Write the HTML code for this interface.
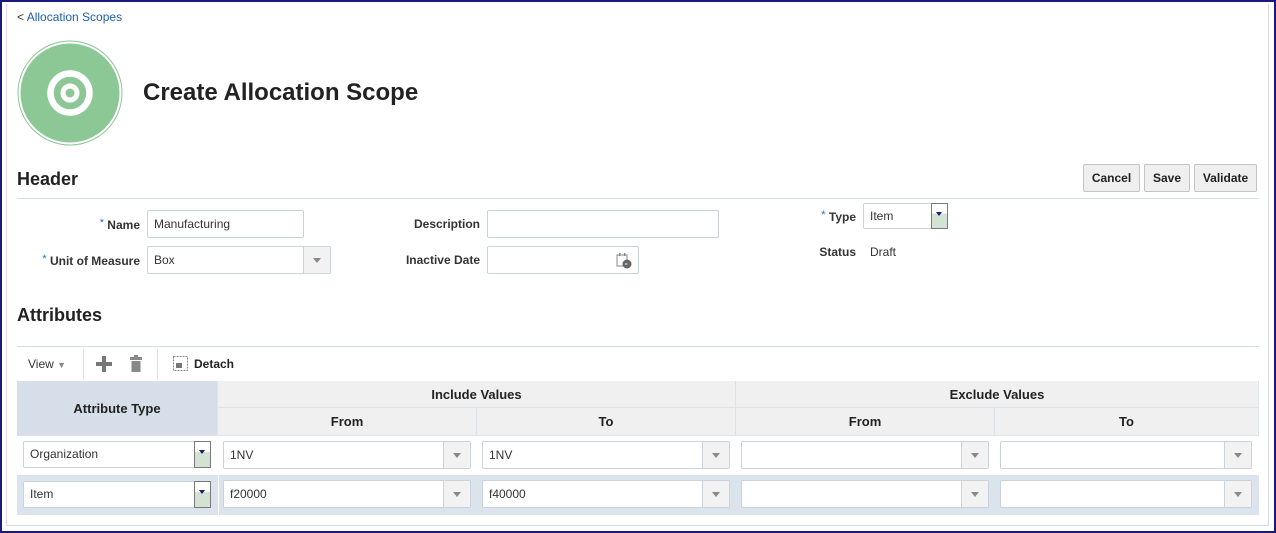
<!DOCTYPE html>
<html><head><meta charset="utf-8"><style>
*{box-sizing:border-box;margin:0;padding:0}
body{width:1276px;height:533px;overflow:hidden;background:#fff;font-family:"Liberation Sans",Arial,sans-serif;font-size:12px;color:#333;position:relative}
.frame{position:absolute;left:0;top:0;width:1276px;height:533px;border:2px solid #1a1a7a}
.panel{position:absolute;left:6px;top:4px;width:1263px;height:522px;border:1px solid #d6dde6;border-top:none}
.a{position:absolute}
.lbl{position:absolute;font-weight:bold;color:#333;text-align:right;font-size:12px}
.star{color:#1f6fc9;font-weight:normal;vertical-align:3px;font-size:11px}
.in{position:absolute;border:1px solid #c9d3dc;border-radius:2px;background:#fff;padding-left:6px;line-height:26px;font-size:12px;color:#333}
.dd{position:absolute;right:0;top:0;bottom:0;width:27px;border-left:1px solid #c9d3dc;background:#f2f2f2}
.dd:after{content:"";position:absolute;left:9px;top:11px;border:4.5px solid transparent;border-top:5px solid #8a8a8a}
.sd{position:absolute;right:-1px;top:-1px;bottom:-1px;width:17px;border:1px solid #7a7a7a;background:linear-gradient(#fff 40%,#d4e2d4 40%)}
.sd:after{content:"";position:absolute;left:4px;top:8px;border:3.5px solid transparent;border-top:4px solid #1a1a7a}
.btn{position:absolute;top:164px;height:28px;border:1px solid #c4c4c4;border-radius:2px;background:#efefef;font-weight:bold;font-size:12px;color:#222;text-align:center;line-height:26px}
h2{position:absolute;font-size:18px;font-weight:bold;color:#222}
.th{position:absolute;background:#f0f0f0;font-weight:bold;color:#222;text-align:center;font-size:13px;border-right:1px solid #dde3ea;border-bottom:1px solid #dde3ea}
</style></head><body>
<div class="frame"></div>
<div class="panel"></div>
<div class="a" style="left:17px;top:10px;font-size:12px;color:#333">&lt; <span style="color:#1f5fa8">Allocation Scopes</span></div>
<svg class="a" style="left:17px;top:40px" width="106" height="106" viewBox="0 0 106 106">
<circle cx="53" cy="53" r="52" fill="#fff" stroke="#8cc796" stroke-width="1"/>
<circle cx="53" cy="53" r="49.5" fill="#8cc796"/>
<circle cx="53" cy="53" r="19.5" fill="none" stroke="#fff" stroke-width="6.5"/>
<circle cx="53" cy="53" r="7" fill="none" stroke="#fff" stroke-width="5"/>
</svg>
<div class="a" style="left:143px;top:79px;font-size:24px;font-weight:bold;color:#222">Create Allocation Scope</div>
<h2 style="left:17px;top:169px">Header</h2>
<div class="a" style="left:17px;top:198px;width:1242px;height:1px;background:#d6dde6"></div>
<div class="btn" style="left:1083px;width:57px">Cancel</div>
<div class="btn" style="left:1144px;width:46px">Save</div>
<div class="btn" style="left:1194px;width:63px">Validate</div>
<div class="lbl" style="left:40px;top:217px;width:100px"><span class="star">*</span> Name</div>
<div class="in" style="left:147px;top:210px;width:157px;height:28px">Manufacturing</div>
<div class="lbl" style="left:30px;top:253px;width:110px"><span class="star">*</span> Unit of Measure</div>
<div class="in" style="left:147px;top:246px;width:184px;height:28px">Box<div class="dd"></div></div>
<div class="lbl" style="left:380px;top:217px;width:100px">Description</div>
<div class="in" style="left:487px;top:210px;width:232px;height:28px"></div>
<div class="lbl" style="left:380px;top:253px;width:100px">Inactive Date</div>
<div class="in" style="left:487px;top:246px;width:152px;height:28px">
<svg style="position:absolute;right:6px;top:6px" width="16" height="16" viewBox="0 0 16 16"><rect x="1" y="2" width="10" height="11" fill="none" stroke="#888"/><rect x="3" y="0" width="1.5" height="3" fill="#888"/><rect x="8" y="0" width="1.5" height="3" fill="#888"/><circle cx="11" cy="11" r="4.5" fill="#666"/><path d="M9 11h2.5" stroke="#fff"/></svg></div>
<div class="lbl" style="left:800px;top:209px;width:56px"><span class="star">*</span> Type</div>
<div class="in" style="left:863px;top:203px;width:85px;height:26px;line-height:24px">Item<div class="sd"></div></div>
<div class="lbl" style="left:800px;top:245px;width:56px">Status</div>
<div class="a" style="left:870px;top:245px;font-size:12px">Draft</div>
<h2 style="left:17px;top:305px">Attributes</h2>
<div class="a" style="left:17px;top:346px;width:1242px;height:1px;background:#d6dde6"></div>
<div class="a" style="left:28px;top:357px;font-size:12px">View <span style="color:#888;font-size:9px">▼</span></div>
<div class="a" style="left:83px;top:349px;width:1px;height:30px;background:#dde3ea"></div>
<div class="a" style="left:96px;top:356px;width:16px;height:16px"><div class="a" style="left:0;top:6px;width:16px;height:4px;background:#777"></div><div class="a" style="left:6px;top:0;width:4px;height:16px;background:#777"></div></div>
<svg class="a" style="left:130px;top:355px" width="12" height="17" viewBox="0 0 12 17"><rect x="4" y="0" width="4" height="2" fill="#888"/><rect x="0" y="2" width="12" height="3" fill="#888"/><rect x="1.5" y="6" width="9" height="11" fill="#888"/></svg>
<div class="a" style="left:157px;top:349px;width:1px;height:30px;background:#dde3ea"></div>
<svg class="a" style="left:173px;top:356px" width="15" height="15"><rect x="0.5" y="0.5" width="14" height="14" fill="none" stroke="#888" stroke-dasharray="2 1"/><rect x="3" y="7" width="6" height="5" fill="#777"/></svg>
<div class="a" style="left:194px;top:357px;font-weight:bold;color:#222">Detach</div>
<div class="a" style="left:17px;top:381px;width:1242px;height:134px;background:#dbe3ec"></div>
<div class="th" style="left:17px;top:381px;width:201px;height:55px;background:#d5dee9;line-height:55px">Attribute Type</div>
<div class="th" style="left:218px;top:381px;width:518px;height:27px;line-height:27px">Include Values</div>
<div class="th" style="left:736px;top:381px;width:523px;height:27px;line-height:27px">Exclude Values</div>
<div class="th" style="left:218px;top:408px;width:259px;height:28px;line-height:28px">From</div>
<div class="th" style="left:477px;top:408px;width:259px;height:28px;line-height:28px">To</div>
<div class="th" style="left:736px;top:408px;width:259px;height:28px;line-height:28px">From</div>
<div class="th" style="left:995px;top:408px;width:264px;height:28px;line-height:28px">To</div>
<div class="a" style="left:17px;top:436px;width:1242px;height:39px;background:#fff"></div>
<div class="a" style="left:218px;top:436px;width:1px;height:79px;background:#fff"></div>
<div class="in" style="left:23px;top:441px;width:188px;height:27px;line-height:25px">Organization<div class="sd"></div></div>
<div class="in" style="left:223px;top:441px;width:248px;height:28px">1NV<div class="dd"></div></div>
<div class="in" style="left:482px;top:441px;width:248px;height:28px">1NV<div class="dd"></div></div>
<div class="in" style="left:741px;top:441px;width:248px;height:28px"><div class="dd"></div></div>
<div class="in" style="left:1000px;top:441px;width:252px;height:28px"><div class="dd"></div></div>
<div class="in" style="left:23px;top:481px;width:188px;height:27px;line-height:25px">Item<div class="sd"></div></div>
<div class="in" style="left:223px;top:480px;width:248px;height:28px">f20000<div class="dd"></div></div>
<div class="in" style="left:482px;top:480px;width:248px;height:28px">f40000<div class="dd"></div></div>
<div class="in" style="left:741px;top:480px;width:248px;height:28px"><div class="dd"></div></div>
<div class="in" style="left:1000px;top:480px;width:252px;height:28px"><div class="dd"></div></div>
</body></html>
